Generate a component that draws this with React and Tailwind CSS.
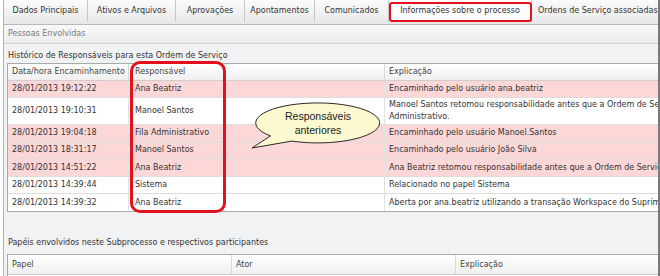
const tabs = [
  { label: 'Dados Principais', cls: 'w-[84px] justify-center' },
  { label: 'Ativos e Arquivos', cls: 'w-[88px] justify-center' },
  { label: 'Aprovações', cls: 'w-[69px] justify-center' },
  { label: 'Apontamentos', cls: 'w-[70px] justify-center' },
  { label: 'Comunicados', cls: 'w-[74px] justify-center' },
  { label: 'Informações sobre o processo', cls: 'w-[143px] justify-center bg-[#fdfdfd]' },
  { label: 'Ordens de Serviço associadas', cls: 'w-[150px] pl-[6px]' },
];

const rows = [
  {
    date: '28/01/2013 19:12:22',
    who: 'Ana Beatriz',
    why: ['Encaminhado pelo usuário ana.beatriz'],
    cls: 'h-[17px] bg-[#fcd7d7]',
  },
  {
    date: '28/01/2013 19:10:31',
    who: 'Manoel Santos',
    why: [
      'Manoel Santos retomou responsabilidade antes que a Ordem de Serviço fosse encaminhada para a Fila',
      'Administrativo.',
    ],
    cls: 'h-[27px] bg-white',
  },
  {
    date: '28/01/2013 19:04:18',
    who: 'Fila Administrativo',
    why: ['Encaminhado pelo usuário Manoel.Santos'],
    cls: 'h-[17px] bg-[#fcd7d7]',
  },
  {
    date: '28/01/2013 18:31:17',
    who: 'Manoel Santos',
    why: ['Encaminhado pelo usuário João Silva'],
    cls: 'h-[17px] bg-[#fcd7d7]',
  },
  {
    date: '28/01/2013 14:51:22',
    who: 'Ana Beatriz',
    why: ['Ana Beatriz retomou responsabilidade antes que a Ordem de Serviço fosse encaminhada'],
    cls: 'h-[18px] bg-[#fcd7d7]',
  },
  {
    date: '28/01/2013 14:39:44',
    who: 'Sistema',
    why: ['Relacionado no papel Sistema'],
    cls: 'h-[17px] bg-white',
  },
  {
    date: '28/01/2013 14:39:32',
    who: 'Ana Beatriz',
    why: ['Aberta por ana.beatriz utilizando a transação Workspace do Suprimentos'],
    cls: 'h-[17px] bg-white',
  },
];

function Callout() {
  return (
    <>
      <svg className="absolute left-[248px] top-[101px] overflow-visible" width="140" height="52" viewBox="0 0 140 52">
        <path
          d="M 43.8 40.1 A 62 20 0 1 0 22.5 34.9 L 4 47 Z"
          fill="#fcf8cf"
          stroke="#2a2a2a"
          strokeWidth="1"
          strokeLinejoin="round"
        />
      </svg>
      <div className="absolute left-[258px] top-[109px] w-[120px] text-center font-['Liberation_Sans',Arial,sans-serif] text-[10.5px] leading-[14px] text-[#222]">
        Responsáveis
        <br />
        anteriores
      </div>
    </>
  );
}

export default function App() {
  return (
    <div className="relative w-[660px] h-[276px] overflow-hidden bg-white font-['DejaVu_Sans',Verdana,sans-serif] text-[8px] leading-[10px] text-[#333]">
      <div className="ml-[3px] w-[657px] h-full flex flex-col overflow-hidden border-l border-r-2 border-l-[#b4b4b4] border-r-[#7a7a7a] bg-[#f1f2f4]">
        {/* tab strip */}
        <div className="flex h-[25px] shrink-0 border-b border-[#b9b9b9] bg-linear-to-b from-[#fbfbfb] to-[#e8e8e8]">
          {tabs.map((t) => (
            <div
              key={t.label}
              className={`flex h-[22px] shrink-0 items-center whitespace-nowrap border-r border-[#c6c6c6] ${t.cls}`}
            >
              {t.label}
            </div>
          ))}
        </div>

        <div className="flex h-[19px] shrink-0 items-center pl-1 border-b border-[#d2d2d2] bg-linear-to-b from-[#f9f9f9] to-[#ececec] text-[#7a7a7a]">
          Pessoas Envolvidas
        </div>

        <div className="pl-[3px]">
          <div className="flex h-[19px] items-end pb-[2px] pl-px">
            Histórico de Responsáveis para esta Ordem de Serviço
          </div>

          {/* history table */}
          <div className="w-[760px] border border-[#a9a9a9] bg-white">
            <div className="grid h-[17px] grid-cols-[121px_256px_1fr] border-b border-[#cfcfcf] bg-linear-to-b from-white to-[#efefef] text-[#444]">
              <div className="flex items-center pl-1 border-r border-[#d9d9d9]">Data/hora Encaminhamento</div>
              <div className="flex items-center pl-[6px] border-r border-[#d9d9d9]">Responsável</div>
              <div className="flex items-center pl-1">Explicação</div>
            </div>
            {rows.map((r, i) => (
              <div
                key={r.date}
                className={`grid grid-cols-[121px_256px_1fr] ${r.cls} ${i < rows.length - 1 ? 'border-b border-[#e0dcdc]' : ''}`}
              >
                <div className="flex items-center pl-1 border-r border-[#e2e2e2]">{r.date}</div>
                <div className="flex items-center pl-[6px] border-r border-[#e2e2e2]">{r.who}</div>
                <div className="flex flex-col justify-center pl-1 leading-[12px] whitespace-nowrap">
                  {r.why.map((line) => (
                    <span key={line}>{line}</span>
                  ))}
                </div>
              </div>
            ))}
          </div>

          <div className="mt-[26px] pl-px">Papéis envolvidos neste Subprocesso e respectivos participantes</div>

          {/* roles table */}
          <div className="mt-[6px] w-[760px] border border-[#a9a9a9] bg-white">
            <div className="grid h-[20px] grid-cols-[224px_224px_1fr] border-b border-[#cfcfcf] bg-linear-to-b from-white to-[#efefef] text-[#444]">
              <div className="flex items-center pl-1 border-r border-[#d9d9d9]">Papel</div>
              <div className="flex items-center pl-1 border-r border-[#d9d9d9]">Ator</div>
              <div className="flex items-center pl-1">Explicação</div>
            </div>
            <div className="h-[20px]" />
          </div>
        </div>
      </div>

      {/* annotations */}
      <div className="absolute left-[389px] top-[2px] h-[20px] w-[143px] rounded-[3px] border-2 border-[#e4101c]" />
      <div className="absolute left-[130px] top-[61px] h-[152px] w-[96px] rounded-[10px] border-[3px] border-[#e4101c]" />
      <Callout />
    </div>
  );
}
